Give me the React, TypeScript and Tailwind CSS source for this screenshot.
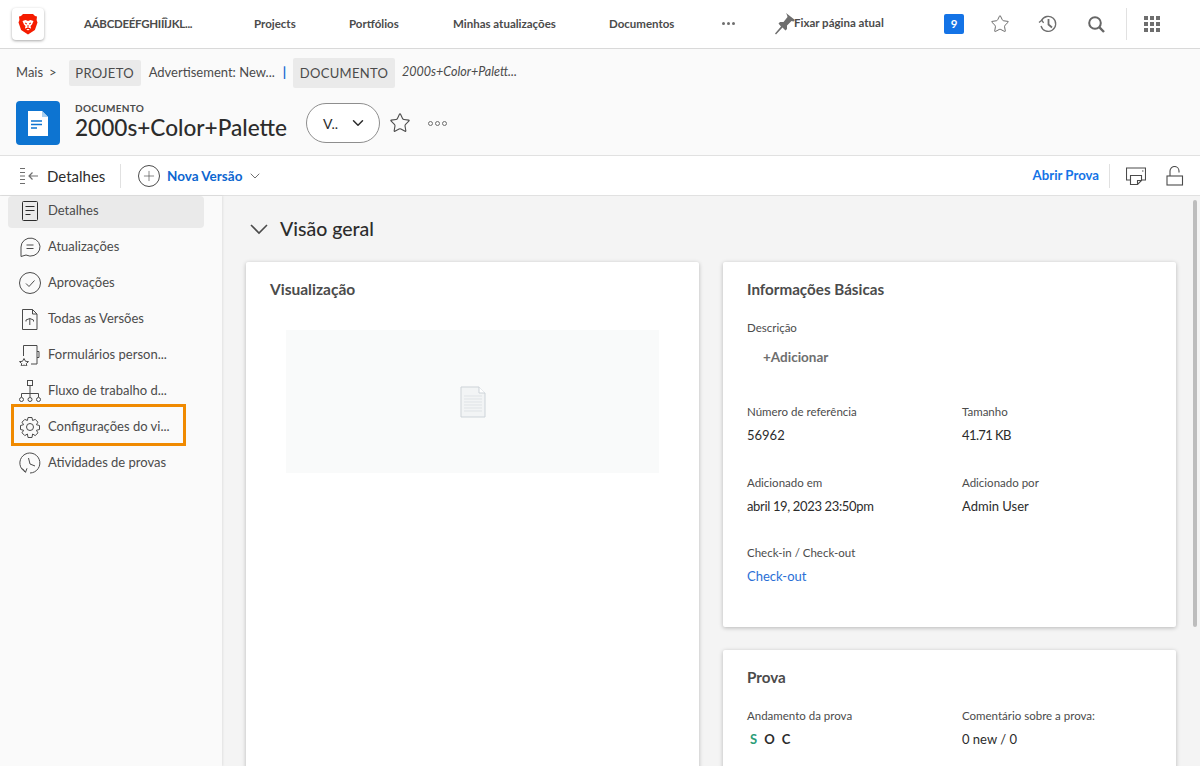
import { ChevronDown, Star, Plus } from 'lucide-react'

const font = { fontFamily: 'Lato, "Open Sans", sans-serif' }

function BraveLogo() {
  return (
    <svg width="20" height="22" viewBox="0 0 20 22">
      <path d="M5 1h10l2 2 2 0.5L18.6 7l0.9 2.5-2.6 7.5L10 21.5 3.100 17 0.500 9.500 1.400 7 1 3.500 3 3z" fill="#f51c00" />
      <path d="M4.500 8l3-1 2.500 1 2.500-1 3 1-1.500 3.500-1.500 1.500 0.500 2-3 2.500-3-2.500 0.500-2-1.500-1.500z" fill="#fff" />
      <path d="M7 10l2 1M13 10l-2 1M10 12v3M8 15.500h4" stroke="#f51c00" strokeWidth="1" fill="none" />
    </svg>
  )
}

function PinIcon() {
  return (
    <svg width="22" height="24" viewBox="0 0 22 24">
      <path d="M12 1l9 7-1.500 1.500-2-.5-4.500 4.500 0 3.500-1.500 1.500-3-3L2 22.500 1 21.500 7 14.500 4.500 11.500 6 10l3.500 0L13.500 5 13 3z" fill="#6e6e6e" />
    </svg>
  )
}

function HistoryIcon() {
  return (
    <svg width="20" height="20" viewBox="0 0 20 20" fill="none" stroke="#6e6e6e" strokeWidth="1.300">
      <path d="M3.500 6.500A7.500 7.500 0 1 1 3 12" />
      <path d="M1 8.500l2.800-2.200 1.800 2.600" />
      <path d="M10.500 5v5.500l3.500 3" strokeWidth="1.800" />
    </svg>
  )
}

function SearchIcon() {
  return (
    <svg width="17" height="17" viewBox="0 0 17 17" fill="none" stroke="#666666" strokeWidth="2">
      <circle cx="7" cy="7" r="5.800" />
      <path d="M11.200 11.200l4.800 4.800" strokeWidth="2.400" />
    </svg>
  )
}

function GridIcon() {
  return (
    <div className="grid grid-cols-3 gap-[2px]">
      {Array.from({ length: 9 }).map((_, i) => (
        <span key={i} className="w-[4px] h-[4px] bg-[#6e6e6e]" />
      ))}
    </div>
  )
}

function DocIcon() {
  return (
    <div className="w-[44px] h-[44px] rounded-[4px] bg-[#0d74d1] flex items-center justify-center">
      <svg width="20" height="25" viewBox="0 0 20 25">
        <path d="M0 0h14l6 6v19H0z" fill="#fff" />
        <path d="M14 0l6 6h-6z" fill="#a9d0f0" />
        <path d="M3 10h11M3 13.500h11M3 17h6" stroke="#0d74d1" strokeWidth="1.600" />
      </svg>
    </div>
  )
}

const sideIcon = { fill: 'none', stroke: '#4b4b4b', strokeWidth: 1 }

function SideIcon({ name }: { name: string }) {
  if (name === 'details')
    return (
      <svg width="22" height="22" viewBox="0 0 22 22" {...sideIcon} stroke="#2c2c2c">
        <rect x="3.500" y="1.500" width="15" height="19" rx="1" />
        <path d="M6.500 6.500h9M6.500 10.500h9M6.500 14.500h5" />
      </svg>
    )
  if (name === 'updates')
    return (
      <svg width="22" height="22" viewBox="0 0 22 22" {...sideIcon}>
        <path d="M2 20.500V11a9.500 9 0 1 1 5 8z" />
        <path d="M7.500 9h7M7.500 12.500h7" />
      </svg>
    )
  if (name === 'approvals')
    return (
      <svg width="22" height="22" viewBox="0 0 22 22" {...sideIcon}>
        <circle cx="11" cy="11" r="10.500" />
        <path d="M7 11.500l3 3 5.500-6" />
      </svg>
    )
  if (name === 'versions')
    return (
      <svg width="22" height="22" viewBox="0 0 22 22" {...sideIcon}>
        <path d="M3.500 1.500h10l4.500 4.500v15.500H3.500z" />
        <path d="M13.500 1.500V6H18" />
        <path d="M7 12l3.800-1.500L14.500 12M10.800 10.500V17M7 12v1.500M14.500 12v1.500" />
      </svg>
    )
  if (name === 'forms')
    return (
      <svg width="22" height="22" viewBox="0 0 22 22" {...sideIcon}>
        <path d="M4.500 12V1.500h13.500V20h-6" />
        <path d="M18 7.500h2v6h-2" />
        <path d="M5 14.500l1.500 2.800 3 .3-2.200 2 .6 2.900L5 21l-2.900 1.500.6-2.900-2.200-2 3-.3z" />
      </svg>
    )
  if (name === 'workflow')
    return (
      <svg width="22" height="22" viewBox="0 0 22 22" {...sideIcon}>
        <rect x="8.500" y="0.500" width="5" height="5" />
        <path d="M11 5.500v8M2.500 17v-3.500h17V17M11 13.500V17" />
        <circle cx="2.500" cy="19.500" r="2" />
        <circle cx="11" cy="19.500" r="2" />
        <circle cx="19.500" cy="19.500" r="2" />
      </svg>
    )
  if (name === 'settings')
    return (
      <svg width="22" height="22" viewBox="0 0 22 22" {...sideIcon}>
        <circle cx="11" cy="11" r="3.500" />
        <path d="M9 1.500h4l.6 3 2.600-1.100 2.800 2.800-1.600 2.500 3.100.8v4l-3.100.8 1.600 2.500-2.800 2.800-2.600-1.600-.6 3.500H9l-.6-3.500-2.600 1.600L3 16.800l1.600-2.500-3.100-.8v-4l3.100-.8L3 6.200 5.800 3.400l2.600 1.100z" />
      </svg>
    )
  return (
    <svg width="22" height="22" viewBox="0 0 22 22" {...sideIcon}>
      <path d="M6.500 20A10 10 0 1 1 11 21" />
      <path d="M3.500 16.500l3 3.800 1.500-4" />
      <path d="M9.500 6l1.500 6 5 2" />
    </svg>
  )
}

const sideItems = [
  { icon: 'details', label: 'Detalhes' },
  { icon: 'updates', label: 'Atualizações' },
  { icon: 'approvals', label: 'Aprovações' },
  { icon: 'versions', label: 'Todas as Versões' },
  { icon: 'forms', label: 'Formulários person...' },
  { icon: 'workflow', label: 'Fluxo de trabalho d...' },
  { icon: 'settings', label: 'Configurações do vi...' },
  { icon: 'activity', label: 'Atividades de provas' },
]

function Field({ label, children }: { label: string; children: React.ReactNode }) {
  return (
    <div>
      <div className="text-[11.5px] leading-[16px] text-[#4b4b4b]">{label}</div>
      <div className="mt-[5px] text-[13px] leading-[20px] text-[#2c2c2c]">{children}</div>
    </div>
  )
}

export default function App() {
  return (
    <div style={font} className="h-[766px] w-[1200px] overflow-hidden flex flex-col bg-[#f4f4f4] text-[#2c2c2c]">
      {/* Top nav */}
      <header className="h-[49px] shrink-0 bg-white border-b border-[#d9d9d9] flex items-center pl-[12px] text-[11.5px] font-bold text-[#4b4b4b]">
        <div className="w-[32px] h-[32px] rounded-[4px] bg-white shadow-[0_1px_3px_rgba(0,0,0,0.35)] flex items-center justify-center">
          <BraveLogo />
        </div>
        <span className="ml-[40px] w-[170px] tracking-[-0.3px]">AÁBCDEÉFGHIÍÎJKL...</span>
        <span className="w-[95px]">Projects</span>
        <span className="w-[104px]">Portfólios</span>
        <span className="w-[156px]">Minhas atualizações</span>
        <span className="w-[113px]">Documentos</span>
        <div className="w-[52px] flex gap-[2px] -mt-[1px]">
          <span className="w-[3px] h-[3px] rounded-full bg-[#6e6e6e]" />
          <span className="w-[3px] h-[3px] rounded-full bg-[#6e6e6e]" />
          <span className="w-[3px] h-[3px] rounded-full bg-[#6e6e6e]" />
        </div>
        <div className="flex items-center w-[170px]">
          <PinIcon />
          <span className="-ml-[2px] -mt-[3px]">Fixar página atual</span>
        </div>
        <span className="w-[20px] h-[20px] rounded-[2px] bg-[#1473e6] text-white flex items-center justify-center">9</span>
        <Star size={20} strokeWidth={1.2} color="#6e6e6e" className="ml-[26px]" />
        <div className="ml-[28px]"><HistoryIcon /></div>
        <div className="ml-[30px] w-[18px]"><SearchIcon /></div>
        <div className="ml-[20px] w-px h-[32px] bg-[#e1e1e1]" />
        <div className="ml-[17px]"><GridIcon /></div>
      </header>

      {/* Breadcrumb + title */}
      <section className="h-[107px] shrink-0 bg-[#fafafa] border-b border-[#e1e1e1] pl-[16px]">
        <div className="h-[47px] flex items-center text-[13px] text-[#4b4b4b] whitespace-nowrap">
          <span>Mais</span>
          <span className="ml-[6px]">&gt;</span>
          <span className="ml-[12px] w-[72px] text-center h-[26px] leading-[26px] bg-[#eaeaea] rounded-[2px] tracking-[0.3px]">PROJETO</span>
          <span className="ml-[8px] w-[125px]">Advertisement: New...</span>
          <span className="ml-[9px] text-[#0d66d0] font-bold">|</span>
          <span className="ml-[7px] w-[102px] text-center h-[30px] leading-[30px] bg-[#eaeaea] rounded-[2px] tracking-[0.3px]">DOCUMENTO</span>
          <span className="ml-[7px] text-[12.5px] italic">2000s+Color+Palett...</span>
        </div>
        <div className="flex items-center h-[44px] mt-[5px]">
          <DocIcon />
          <div className="ml-[15px] w-[231px]">
            <div className="text-[10px] leading-[12px] font-bold tracking-[0.3px] text-[#4b4b4b] -mt-[3px]">DOCUMENTO</div>
            <div className="text-[22.6px] leading-[27px] font-medium whitespace-nowrap">2000s+Color+Palette</div>
          </div>
          <div className="w-[74px] h-[40px] rounded-full border border-[#8e8e8e] bg-white flex items-center pl-[16px] text-[14px]">
            V..
            <ChevronDown size={18} strokeWidth={2} className="ml-[11px]" />
          </div>
          <Star size={22} strokeWidth={1.2} color="#4b4b4b" className="ml-[9px]" />
          <div className="ml-[17px] flex gap-[2px]">
            <span className="w-[5px] h-[5px] rounded-full border border-[#6e6e6e]" />
            <span className="w-[5px] h-[5px] rounded-full border border-[#6e6e6e]" />
            <span className="w-[5px] h-[5px] rounded-full border border-[#6e6e6e]" />
          </div>
        </div>
      </section>

      {/* Toolbar */}
      <section className="h-[40px] shrink-0 bg-white border-b border-[#e1e1e1] flex items-center pl-[20px] pr-[16px]">
        <svg width="20" height="18" viewBox="0 0 20 18" fill="none" stroke="#6e6e6e" strokeWidth="1.200">
          <path d="M0 1.500h5M0 5.500h5M0 9h5M0 12.500h5M0 16.500h5" />
          <path d="M18 9H9M12.500 5.500L9 9l3.500 3.500" />
        </svg>
        <span className="ml-[7px] mt-[1px] w-[58px] text-[15px] text-[#2c2c2c]">Detalhes</span>
        <div className="ml-[15px] w-px h-[24px] bg-[#e1e1e1]" />
        <div className="ml-[17px] w-[22px] h-[22px] rounded-full border border-[#4b4b4b] flex items-center justify-center">
          <Plus size={16} strokeWidth={1} color="#4b4b4b" />
        </div>
        <span className="ml-[7px] mt-[1px] text-[13.5px] font-bold text-[#0d66d0]">Nova Versão</span>
        <ChevronDown size={16} strokeWidth={1.200} color="#4b4b4b" className="ml-[5px]" />
        <span className="ml-auto text-[13.2px] font-bold text-[#1473e6]">Abrir Prova</span>
        <div className="ml-[10px] w-px h-[24px] bg-[#e1e1e1]" />
        <svg className="ml-[16px]" width="20" height="18" viewBox="0 0 20 18" fill="none" stroke="#4b4b4b" strokeWidth="1.100">
          <path d="M4 13H.500V1h19v12H16" />
          <path d="M4.500 8.500h11v5l-4 4h-7zM11.500 17.500v-4h4" />
          <path d="M16 4h1.500" />
        </svg>
        <svg className="ml-[20px]" width="18" height="20" viewBox="0 0 18 20" fill="none" stroke="#4b4b4b" strokeWidth="1.100">
          <rect x="1" y="10" width="15.500" height="9" />
          <path d="M4 10V5a4.500 4.500 0 0 1 9 0v1.500" />
        </svg>
      </section>

      <div className="flex-1 min-h-0 flex">
        {/* Sidebar */}
        <aside className="relative w-[222px] shrink-0 bg-[#fafafa] shadow-[1px_0_2px_rgba(0,0,0,0.08)] pl-[8px] pr-[18px]">
          {sideItems.map((item, i) => (
            <div
              key={item.label}
              className={`h-[32px] mb-[4px] pb-[2px] flex items-center pl-[11px] rounded-[4px] text-[13px] text-[#4b4b4b] whitespace-nowrap ${i === 0 ? 'bg-[#eaeaea]' : ''}`}
            >
              <SideIcon name={item.icon} />
              <span className="ml-[7px]">{item.label}</span>
            </div>
          ))}
          <div className="absolute left-[11px] top-[208px] w-[175px] h-[42px] border-[3px] border-[#f08a00]" />
        </aside>

        {/* Main */}
        <main className="relative flex-1 min-w-0 pl-[24px] pr-[24px] overflow-hidden">
          <div className="h-[66px] flex items-center">
            <svg width="18" height="11" viewBox="0 0 18 11" fill="none" stroke="#4b4b4b" strokeWidth="1.600" className="ml-[4px]">
              <path d="M1 1l8 8 8-8" />
            </svg>
            <span className="ml-[12px] text-[19.5px] font-medium text-[#2c2c2c]">Visão geral</span>
          </div>
          <div className="flex gap-[24px] items-start">
            <div className="w-[453px] h-[600px] shrink-0 bg-white rounded-[2px] shadow-[0_1px_4px_rgba(0,0,0,0.25)] pt-[17px] px-[24px]">
              <h2 className="text-[15.5px] leading-[20px] font-bold text-[#4b4b4b]">Visualização</h2>
              <div className="mt-[31px] mx-[16px] h-[143px] bg-[#f9fafa] flex items-center justify-center">
                <svg width="28" height="32" viewBox="0 0 28 32" fill="none">
                  <path d="M2 1h18l6 6v24H2z" fill="#f2f4f5" stroke="#cdd3d8" />
                  <path d="M20 1v6h6" fill="#fff" stroke="#cdd3d8" />
                  <path d="M5 10h18M5 13h18M5 16h18M5 19h18M5 22h18M5 25h18" stroke="#dfe3e6" />
                </svg>
              </div>
            </div>
            <div className="w-[453px] shrink-0 flex flex-col gap-[23px]">
              <div className="h-[365px] bg-white rounded-[2px] shadow-[0_1px_4px_rgba(0,0,0,0.25)] pt-[17px] px-[24px]">
                <h2 className="text-[15.2px] leading-[20px] font-bold text-[#4b4b4b]">Informações Básicas</h2>
                <div className="mt-[21px] text-[11.5px] leading-[16px] text-[#4b4b4b]">Descrição</div>
                <div className="mt-[11px] ml-[16px] text-[13.5px] leading-[20px] font-bold text-[#6e6e6e]">+Adicionar</div>
                <div className="mt-[37px] grid grid-cols-[215px_1fr] gap-y-[29.500px]">
                  <Field label="Número de referência">56962</Field>
                  <Field label="Tamanho"><span className="tracking-[-0.6px]">41.71 KB</span></Field>
                  <Field label="Adicionado em"><span className="tracking-[-0.35px]">abril 19, 2023 23:50pm</span></Field>
                  <Field label="Adicionado por">Admin User</Field>
                  <Field label="Check-in / Check-out"><span className="text-[#2a6fd6]">Check-out</span></Field>
                </div>
              </div>
              <div className="h-[200px] bg-white rounded-[2px] shadow-[0_1px_4px_rgba(0,0,0,0.25)] pt-[17px] px-[24px]">
                <h2 className="text-[15.2px] leading-[20px] font-bold text-[#4b4b4b]">Prova</h2>
                <div className="mt-[21px] grid grid-cols-[215px_1fr]">
                  <Field label="Andamento da prova">
                    <span className="font-bold ml-[3px] tracking-[7px]"><span className="text-[#2d9d78]">S</span>OC</span>
                  </Field>
                  <Field label="Comentário sobre a prova:">0 new / 0</Field>
                </div>
              </div>
            </div>
          </div>
          <div className="absolute right-[3px] top-[4px] w-[4px] h-[427px] rounded-full bg-[#bdbdbd]" />
        </main>
      </div>
    </div>
  )
}
